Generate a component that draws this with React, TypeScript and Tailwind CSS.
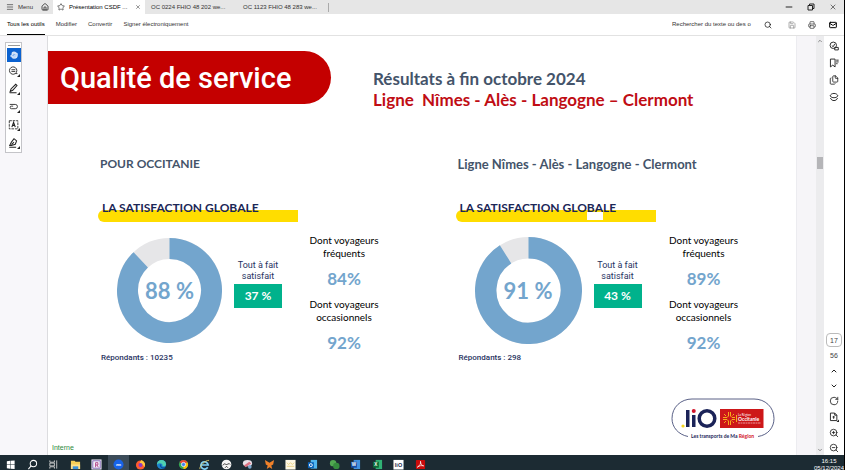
import type { ReactNode } from "react";
import {
  ChevronDown,
  ChevronUp,
  Files,
  Hand,
  Home,
  Mail,
  Menu,
  Minus,
  Printer,
  RotateCw,
  Save,
  Search,
  Star,
  X,
  ZoomIn,
  ZoomOut,
} from "lucide-react";

type Result = {
  title: string;
  titleSize: string;
  percent: number;
  size: number;
  fully: number;
  frequent: number;
  occasional: number;
  respondents: number;
  hasGap?: boolean;
};

const results: Result[] = [
  {
    title: "POUR OCCITANIE",
    titleSize: "text-xs",
    percent: 88,
    size: 105,
    fully: 37,
    frequent: 84,
    occasional: 92,
    respondents: 10235,
  },
  {
    title: "Ligne Nîmes - Alès - Langogne - Clermont",
    titleSize: "text-[13px]",
    percent: 91,
    size: 107,
    fully: 43,
    frequent: 89,
    occasional: 92,
    respondents: 298,
    hasGap: true,
  },
];

const IconButton = ({
  label,
  className = "",
  children,
}: {
  label: string;
  className?: string;
  children: ReactNode;
}) => (
  <button
    type="button"
    aria-label={label}
    className={`flex shrink-0 items-center justify-center ${className}`}
  >
    {children}
  </button>
);

const TabBar = () => (
  <header className="flex h-3.5 items-center bg-[#e6e6e6] text-[6px] text-[#333]">
    <button type="button" className="flex w-9 items-center gap-1 pl-1.5">
      <Menu className="h-2 w-2" />
      Menu
    </button>
    <IconButton label="Accueil" className="w-[17px]">
      <Home className="h-2 w-2 text-black" />
    </IconButton>
    <div className="flex h-full w-[92px] items-center bg-white pl-1">
      <Star className="h-2 w-2" />
      <span className="flex-1 pl-1 whitespace-nowrap text-black">Présentation CSDF ...</span>
      <IconButton label="Fermer l'onglet" className="w-3.5">
        <X className="h-1.5 w-1.5" />
      </IconButton>
    </div>
    <span className="w-[92px] pl-1.5 whitespace-nowrap">OC 0224 FHIO 48 202 we...</span>
    <span className="w-[92px] border-r border-[#aaa] pl-1.5 whitespace-nowrap">
      OC 1123 FHIO 48 283 we...
    </span>
    <div className="ml-auto flex">
      <IconButton label="Réduire" className="w-[22px]">
        <Minus className="h-2.5 w-2.5 text-black" />
      </IconButton>
      <IconButton label="Restaurer" className="w-[22px]">
        <svg viewBox="0 0 8 8" className="h-2 w-2" fill="none" stroke="#222" strokeWidth="1">
          <path d="M1 2.5h4.5V7H1zM2.5 2.500V1H7v4.500H5.500" />
        </svg>
      </IconButton>
      <IconButton label="Fermer" className="w-[22px]">
        <X className="h-2 w-2" />
      </IconButton>
    </div>
  </header>
);

const ToolBar = () => (
  <div className="flex h-[22px] items-center border-b border-[#e2e2e2] bg-white text-[6px] text-[#333]">
    <nav className="flex h-full gap-[11px] pl-[7px]">
      <button type="button" className="border-b border-black text-black">Tous les outils</button>
      <button type="button">Modifier</button>
      <button type="button">Convertir</button>
      <button type="button">Signer électroniquement</button>
    </nav>
    <div className="ml-auto flex items-center">
      <input
        type="text"
        aria-label="Rechercher du texte ou des outils"
        placeholder="Rechercher du texte ou des o"
        className="w-[88px] outline-none placeholder:text-[#333] placeholder:opacity-100"
      />
      <IconButton label="Rechercher" className="w-4">
        <Search className="h-2 w-2 text-black" />
      </IconButton>
      <IconButton label="Enregistrer" className="ml-1 w-6">
        <Save className="h-2 w-2 text-[#888]" />
      </IconButton>
      <IconButton label="Imprimer" className="w-4">
        <Printer className="h-2 w-2" />
      </IconButton>
      <IconButton label="Envoyer" className="ml-0.5 w-[22px]">
        <Mail className="h-2 w-2 text-black" strokeWidth={3} />
      </IconButton>
    </div>
  </div>
);

const Corner = () => (
  <path d="M14 10.500v3.500h-3.500z" fill="currentColor" stroke="none" />
);

const toolButton = "h-[18px] w-full";
const toolSvg = "h-3 w-3";

const ToolPalette = () => (
  <aside className="w-12 shrink-0 border-r border-[#dcdcdf] bg-[#f8f7fa] pt-1.5 pl-[5px]">
    <div className="flex w-[17px] flex-col items-center border border-[#c4c4c8] bg-white text-[#222]">
      <span className="my-0.5 h-px w-3 bg-[#999]" />
      <IconButton label="Main" className="h-3.5 w-3.5 bg-[#0b62d0] text-white">
        <Hand className="h-2 w-2" fill="#bcd8fa" />
      </IconButton>
      <IconButton label="Commentaire" className={toolButton}>
        <svg viewBox="0 0 14 14" className={toolSvg} fill="none" stroke="currentColor">
          <path d="M8.500 10A4.300 4.300 0 1 1 10.300 6.500 4.300 4.300 0 0 1 8.500 10H11M4 5.500h4.500M4 7.500h4.500" />
          <Corner />
        </svg>
      </IconButton>
      <IconButton label="Surligner" className={toolButton}>
        <svg viewBox="0 0 14 14" className={toolSvg} fill="none" stroke="currentColor">
          <path d="M2.500 10l1-3L9 1.500l1.500 1.500L5.500 8.500zM2 11.500h8" strokeWidth="1.200" />
          <Corner />
        </svg>
      </IconButton>
      <IconButton label="Dessiner" className={toolButton}>
        <svg viewBox="0 0 14 14" className={toolSvg} fill="none" stroke="currentColor">
          <path d="M2 4h6.500a2.400 2.400 0 0 1 0 5H4a1.500 1.500 0 0 1 0-3h2" />
          <Corner />
        </svg>
      </IconButton>
      <IconButton label="Texte" className={toolButton}>
        <svg viewBox="0 0 14 14" className={toolSvg} fill="none" stroke="currentColor">
          <path d="M1.500 2h10v9.500h-10z" strokeDasharray="3 1" />
          <path d="M4.500 9.500l2-5.500 2 5.500M5 7.500h3" strokeWidth="1.300" />
          <Corner />
        </svg>
      </IconButton>
      <IconButton label="Signer" className={toolButton}>
        <svg viewBox="0 0 14 14" className={toolSvg} fill="none" stroke="currentColor">
          <path d="M2 10l2-4 3-4 3 2.500-1.500 4L4 10zM7 6l-3 3M1.500 12h8" strokeWidth="1.200" />
          <Corner />
        </svg>
      </IconButton>
    </div>
  </aside>
);

const Donut = ({ percent, size }: { percent: number; size: number }) => {
  const angle = (percent / 100) * 2 * Math.PI;
  const x = 50 + 40 * Math.sin(angle);
  const y = 50 - 40 * Math.cos(angle);

  return (
    <div className="relative shrink-0">
      <svg viewBox="0 0 100 100" width={size} height={size} fill="none" strokeWidth="20">
        <circle cx="50" cy="50" r="40" stroke="#e6e6e8" />
        <path d={`M50 10A40 40 0 1 1 ${x} ${y}`} stroke="#73a5cd" />
      </svg>
      <span className="absolute inset-0 flex items-center justify-center text-[22px] font-bold text-[#73a5cd]">
        {percent} %
      </span>
    </div>
  );
};

const ResultCard = ({ result }: { result: Result }) => (
  <section>
    <h3 className={`pl-0.5 leading-4 font-bold whitespace-nowrap text-[#44546a] ${result.titleSize}`}>
      {result.title}
    </h3>
    <div className="relative mt-7 h-[22px] w-[200px]">
      <span className="absolute inset-x-0 bottom-0 h-3 rounded-l-md bg-[#ffdd00]" />
      {result.hasGap && <span className="absolute bottom-0.5 left-[131px] h-2 w-4 bg-white" />}
      <h4 className="relative pl-1 text-xs leading-4 font-bold whitespace-nowrap text-[#1c2757]">
        LA SATISFACTION GLOBALE
      </h4>
    </div>
    <div className="mt-2 flex h-[120px] items-center pl-[19px]">
      <Donut percent={result.percent} size={result.size} />
      <div className="ml-3 flex w-12 shrink-0 flex-col items-center pb-3">
        <p className="text-center font-['Roboto',sans-serif] text-[9px] leading-[11px] whitespace-nowrap text-[#28335f]">
          Tout à fait
          <br />
          satisfait
        </p>
        <p className="mt-0.5 w-full bg-[#00b28c] text-center text-xs leading-6 font-bold text-white">
          {result.fully} %
        </p>
      </div>
      <div className="ml-5 w-[84px] shrink-0 pt-2 text-center text-[10px] leading-[13px] text-black">
        <p>
          Dont voyageurs
          <br />
          fréquents
        </p>
        <p className="my-2 text-[17px] leading-[22px] font-bold text-[#73a5cd]">{result.frequent}%</p>
        <p>
          Dont voyageurs
          <br />
          occasionnels
        </p>
        <p className="mt-2 text-[17px] leading-[22px] font-bold text-[#73a5cd]">{result.occasional}%</p>
      </div>
    </div>
    <p className="mt-0.5 pl-[3px] font-['Roboto',sans-serif] text-[8px] leading-3 font-medium text-[#28335f]">
      Répondants : {result.respondents}
    </p>
  </section>
);

const LioLogo = () => (
  <svg viewBox="0 0 104 42" className="h-[42px] w-[104px]" role="img" aria-label="liO Occitanie">
    <path
      d="M17 38.500C7 36.500 1 29 1 20.500 1 9 10 1 21 1h62c11 0 20 8 20 19.500 0 9-6 16.500-16 18"
      fill="none"
      stroke="#303968"
      strokeWidth="0.800"
    />
    <g fill="#1b2358">
      <rect x="15" y="12" width="3.500" height="17" />
      <rect x="21" y="17" width="3.500" height="12" />
    </g>
    <circle cx="22.750" cy="13" r="2" fill="#d2142a" />
    <circle cx="12" cy="28" r="1.600" fill="#f4d51f" />
    <circle cx="36" cy="20.500" r="7.800" fill="none" stroke="#1b2358" strokeWidth="3.500" />
    <rect x="49" y="11" width="43.500" height="19" fill="#cd1719" />
    <g stroke="#f6ad1c" fill="none" strokeWidth="1">
      <path d="M57.500 14v4L56 19.500H52M57.500 27v-4L56 21.500H52M59.500 14v4l1.500 1.500h3M59.500 27v-4l1.500-1.500h3" />
      <path d="M53 16l2 2M53 25l2-2M63 16l-1.500 1.500M63 25l-1.500-1.500M65.500 17v7" />
    </g>
    <text x="67" y="17.500" fontSize="3" fill="#fff">La Région</text>
    <text x="67" y="22.500" fontSize="5" fontWeight="700" fill="#fff">Occitanie</text>
    <path d="M67 25h23" stroke="#f3b8b8" strokeWidth="0.800" strokeDasharray="2 0.500" />
    <text x="20" y="40" fontSize="5" fontWeight="700" fill="#1b2358">
      Les transports de Ma <tspan fill="#d2142a">Région</tspan>
    </text>
  </svg>
);

const Slide = () => (
  <main className="flex min-w-0 flex-1 flex-col bg-white pt-[15px] font-['Lato',sans-serif]">
    <div className="flex">
      <h1 className="h-[53px] w-[283px] shrink-0 rounded-r-full bg-[#c40000] pl-3 font-['Roboto',sans-serif] text-[29px] leading-[54px] font-medium whitespace-nowrap text-white">
        Qualité de service
      </h1>
      <div className="pt-[17px] pl-[42px] text-[17px] leading-[21px] font-bold whitespace-pre">
        <h2 className="text-[#44546a]">Résultats à fin octobre 2024</h2>
        <p className="text-[#c00d14]">Ligne  Nîmes - Alès - Langogne – Clermont</p>
      </div>
    </div>
    <div className="mt-[46px] grid grid-cols-2 gap-[57px] pr-10 pl-[50px]">
      {results.map((result) => (
        <ResultCard key={result.title} result={result} />
      ))}
    </div>
    <footer className="mt-auto flex items-end justify-between pr-[21px] pl-1">
      <span className="pb-0.5 font-['Liberation_Sans',sans-serif] text-[7px] text-[#2c8a3c]">Interne</span>
      <div className="pb-[15px]">
        <LioLogo />
      </div>
    </footer>
  </main>
);

const ScrollBar = () => (
  <div className="flex w-2 shrink-0 flex-col items-center justify-between bg-[#ececee] py-0.5 text-[#333]">
    <ChevronUp className="h-1.5 w-1.5" />
    <div className="flex flex-1 flex-col">
      <span className="flex-[29]" />
      <span className="h-3 w-1.5 bg-[#b5b5b8]" />
      <span className="flex-[71]" />
    </div>
    <ChevronDown className="h-1.5 w-1.5" />
  </div>
);

const railButton = "h-4";
const railIcon = "h-2.5 w-2.5";

const RightRail = () => (
  <aside className="flex w-5 shrink-0 flex-col bg-white text-[#222]">
    <div className="flex flex-col gap-px pt-0.5">
      <IconButton label="Assistant" className={railButton}>
        <svg viewBox="0 0 14 14" className={railIcon} fill="none" stroke="currentColor" strokeWidth="1.300">
          <circle cx="6" cy="6" r="4.500" />
          <path d="M4 6.500l2 1.500 2-4M8 9h5v3.500H8z" />
        </svg>
      </IconButton>
      <IconButton label="Signets" className={railButton}>
        <svg viewBox="0 0 14 14" className={railIcon} fill="none" stroke="currentColor" strokeWidth="1.300">
          <path d="M2 1.500h6.500v11L5.250 10 2 12.500z" />
          <path d="M10 3h3.500M10 5.500h3.500M10 8h2" />
        </svg>
      </IconButton>
      <IconButton label="Pages" className={railButton}>
        <Files className={railIcon} />
      </IconButton>
      <IconButton label="Calques" className={railButton}>
        <svg viewBox="0 0 14 14" className={railIcon} fill="none" stroke="currentColor" strokeWidth="1.300">
          <path d="M1.500 5.500C2.500 3 4.500 2 7 2s4.500 1 5.500 3.500C11 7.500 9 8 7 8S3 7.500 1.500 5.500zM2 8.500C3 11 5 12 7 12s4-1 5-3.500" />
        </svg>
      </IconButton>
    </div>
    <div className="mt-auto flex flex-col">
      <input
        type="text"
        aria-label="Page"
        defaultValue="17"
        className="mx-auto h-3.5 w-4 rounded-sm border border-[#bbb] text-center text-[7px] text-[#444]"
      />
      <span className="pt-0.5 text-center text-[7px] leading-3.5 text-[#444]">56</span>
      <IconButton label="Page précédente" className={railButton}>
        <ChevronUp className="h-2 w-2" strokeWidth={3} />
      </IconButton>
      <IconButton label="Page suivante" className="h-3.5">
        <ChevronDown className="h-2 w-2" strokeWidth={3} />
      </IconButton>
      <IconButton label="Pivoter" className={railButton}>
        <RotateCw className={railIcon} />
      </IconButton>
      <IconButton label="Affichage" className={railButton}>
        <svg viewBox="0 0 14 14" className={railIcon} fill="none" stroke="currentColor" strokeWidth="1.300">
          <path d="M2 1.500h6l3 3v7.500H2zM8 1.500v3h3M5 7h3M6.500 5.500v4" />
          <Corner />
        </svg>
      </IconButton>
      <IconButton label="Zoom avant" className={railButton}>
        <ZoomIn className={railIcon} />
      </IconButton>
      <IconButton label="Zoom arrière" className="h-3.5">
        <ZoomOut className={railIcon} />
      </IconButton>
    </div>
  </aside>
);

const apps: { name: string; active?: boolean; art: ReactNode }[] = [
  { name: "Démarrer", art: <path d="M2 2.500l3.500-.5v4H2zM6 2l4.500-.5V6H6zM2 6.500h3.500v4L2 10zM6 6.500h4.500V11L6 10.500z" fill="#fff" /> },
  {
    name: "Recherche",
    art: (
      <g fill="none" stroke="#fff" strokeWidth="1.100">
        <circle cx="7" cy="5" r="3.500" />
        <path d="M4.500 7.500L1.500 11" />
      </g>
    ),
  },
  { name: "Vue des tâches", art: <path d="M2 1.500v2h5v-2M2 10.500v-2h5v2M2 4.500h5v3H2zM9.500 1.500v9" fill="none" stroke="#ddd" strokeWidth="0.900" /> },
  {
    name: "Explorateur",
    art: (
      <>
        <path d="M1 2h4l1 1h5v8H1z" fill="#f6cf58" />
        <path d="M1 6h10v5H1z" fill="#ffe08a" />
        <path d="M3 8h6v3H3z" fill="#3c91d8" />
      </>
    ),
  },
  {
    name: "Rédaction",
    art: (
      <>
        <rect x="0.500" y="0.500" width="11" height="11" fill="#f4f0fc" />
        <rect x="2" y="2" width="8" height="8" fill="none" stroke="#6245a0" strokeWidth="0.800" />
        <path d="M5 9V4h2.500v2.500H5M6.500 6.500L8 9" stroke="#b14083" fill="none" />
      </>
    ),
  },
  {
    name: "Zoom",
    active: true,
    art: (
      <>
        <circle cx="6" cy="6" r="5.500" fill="#1763e8" />
        <text x="6" y="7.500" fontSize="4" fontWeight="700" fill="#fff" textAnchor="middle">zm</text>
      </>
    ),
  },
  {
    name: "Firefox",
    art: (
      <>
        <circle cx="6" cy="6.500" r="5" fill="#ff5b2e" />
        <path d="M7 1c4 2 5 5 3 8-1-4-4-4-5-5z" fill="#ffc83a" />
        <circle cx="6" cy="6.500" r="2.200" fill="#8a3bc8" />
      </>
    ),
  },
  {
    name: "Edge",
    art: (
      <>
        <circle cx="6" cy="6" r="5" fill="#1b83cf" />
        <path d="M1 6a5 5 0 0 1 10 0c0 2-3 2.500-4 1.500C8 5 4 3.500 1 6z" fill="#4fd0b0" />
        <path d="M5 6c-1 3 2 4.500 5 3.500" stroke="#0c4d96" strokeWidth="1.500" fill="none" />
      </>
    ),
  },
  {
    name: "Chrome",
    art: (
      <>
        <circle cx="6" cy="6" r="5" fill="#34a853" />
        <path d="M6 6L1.700 3.500a5 5 0 0 1 8.600 0z" fill="#ea4335" />
        <path d="M6 6l4.300-2.500A5 5 0 0 1 6 11z" fill="#fbbc05" />
        <circle cx="6" cy="6" r="2.300" fill="#4285f4" stroke="#fff" strokeWidth="0.800" />
      </>
    ),
  },
  {
    name: "Internet Explorer",
    art: (
      <>
        <path d="M2.500 6.500H10A4 4 0 1 0 9.500 9" fill="none" stroke="#7fd0f5" strokeWidth="1.800" />
        <path d="M1 11C0 8 7 1 11 1.500" fill="none" stroke="#e9d36b" strokeWidth="0.900" />
      </>
    ),
  },
  {
    name: "Messagerie",
    art: (
      <>
        <circle cx="6" cy="6" r="5.300" fill="#f5f5f5" />
        <path d="M2 7c1.500-3 2.500-1 4-1s3-2 4 0M4.500 9.500L6 8l1.500 1.500" stroke="#222" fill="none" />
      </>
    ),
  },
  {
    name: "Capture",
    art: (
      <>
        <ellipse cx="6" cy="4.500" rx="5" ry="3.500" fill="#e9e1e8" />
        <path d="M2 7l6-4 2 2-6 4z" fill="#dc7283" />
        <circle cx="8.500" cy="8.500" r="2" fill="#7da8cf" />
      </>
    ),
  },
  { name: "Papillon", art: <path d="M6 4L1 1l1 5 2 1-1 4 3-2 3 2-1-4 2-1 1-5z" fill="#f0812a" /> },
  {
    name: "Notes",
    art: (
      <>
        <rect x="0.500" y="1" width="11" height="10.500" fill="#fdf8e4" />
        <path d="M2 4l2 2 2-2 2 2 2-2M2 8h8" stroke="#dfbf58" fill="none" strokeWidth="0.700" />
      </>
    ),
  },
  {
    name: "Outlook",
    art: (
      <>
        <rect x="4" y="1" width="7" height="9.500" fill="#50b5ee" />
        <rect x="1" y="3.500" width="6.500" height="6.500" fill="#0a62b8" />
        <circle cx="4.200" cy="6.700" r="1.600" fill="none" stroke="#fff" />
      </>
    ),
  },
  {
    name: "Discussion",
    art: (
      <>
        <circle cx="4.500" cy="4.500" r="3.500" fill="#51a851" />
        <circle cx="8" cy="7.500" r="3.500" fill="#358c3e" />
      </>
    ),
  },
  {
    name: "Word",
    art: (
      <>
        <rect x="4" y="1" width="7" height="10" fill="#4292e0" />
        <rect x="1" y="3" width="6.500" height="6.500" fill="#174ea6" />
        <text x="4.200" y="8" fontSize="5" fontWeight="700" fill="#fff" textAnchor="middle">W</text>
      </>
    ),
  },
  {
    name: "Excel",
    art: (
      <>
        <rect x="4" y="1" width="7" height="10" fill="#30b275" />
        <rect x="1" y="3" width="6.500" height="6.500" fill="#0d6b38" />
        <text x="4.200" y="8" fontSize="5" fontWeight="700" fill="#fff" textAnchor="middle">X</text>
      </>
    ),
  },
  {
    name: "liO",
    art: (
      <>
        <rect x="0.500" y="1" width="11" height="10.500" fill="#fff" />
        <text x="6" y="8.500" fontSize="6" fontWeight="700" fill="#222a4c" textAnchor="middle">liO</text>
      </>
    ),
  },
  {
    name: "Acrobat",
    art: (
      <>
        <rect x="1" y="1" width="10" height="10" rx="1" fill="#c90b0b" />
        <path d="M2.500 9c3-2 4-4 3.500-6.500C6 5 7 7 9.500 7.500 7 7 5 7 2.500 9z" stroke="#fff" fill="none" strokeWidth="0.800" />
      </>
    ),
  },
];

const TaskBar = () => (
  <footer className="flex h-[15px] items-center justify-between overflow-hidden bg-[#1c2b33]">
    <div className="grid h-full w-[431px] grid-cols-20">
      {apps.map((app) => (
        <IconButton key={app.name} label={app.name} className={app.active ? "bg-[#3c4c59]" : ""}>
          <svg viewBox="0 0 12 12" className="mt-1 h-[11px] w-[11px]">
            {app.art}
          </svg>
        </IconButton>
      ))}
    </div>
    <p className="pt-1 text-center text-[6px] leading-[7px] text-white">
      16:15
      <br />
      05/12/2024
    </p>
  </footer>
);

const App = () => (
  <div className="flex min-h-screen flex-col border-r border-black bg-white font-['Liberation_Sans',sans-serif]">
    <TabBar />
    <ToolBar />
    <div className="flex flex-1">
      <ToolPalette />
      <Slide />
      <div className="w-5 shrink-0 border-l border-[#ececf0] bg-[#f6f5f8]" />
      <ScrollBar />
      <RightRail />
    </div>
    <TaskBar />
  </div>
);

export default App;
